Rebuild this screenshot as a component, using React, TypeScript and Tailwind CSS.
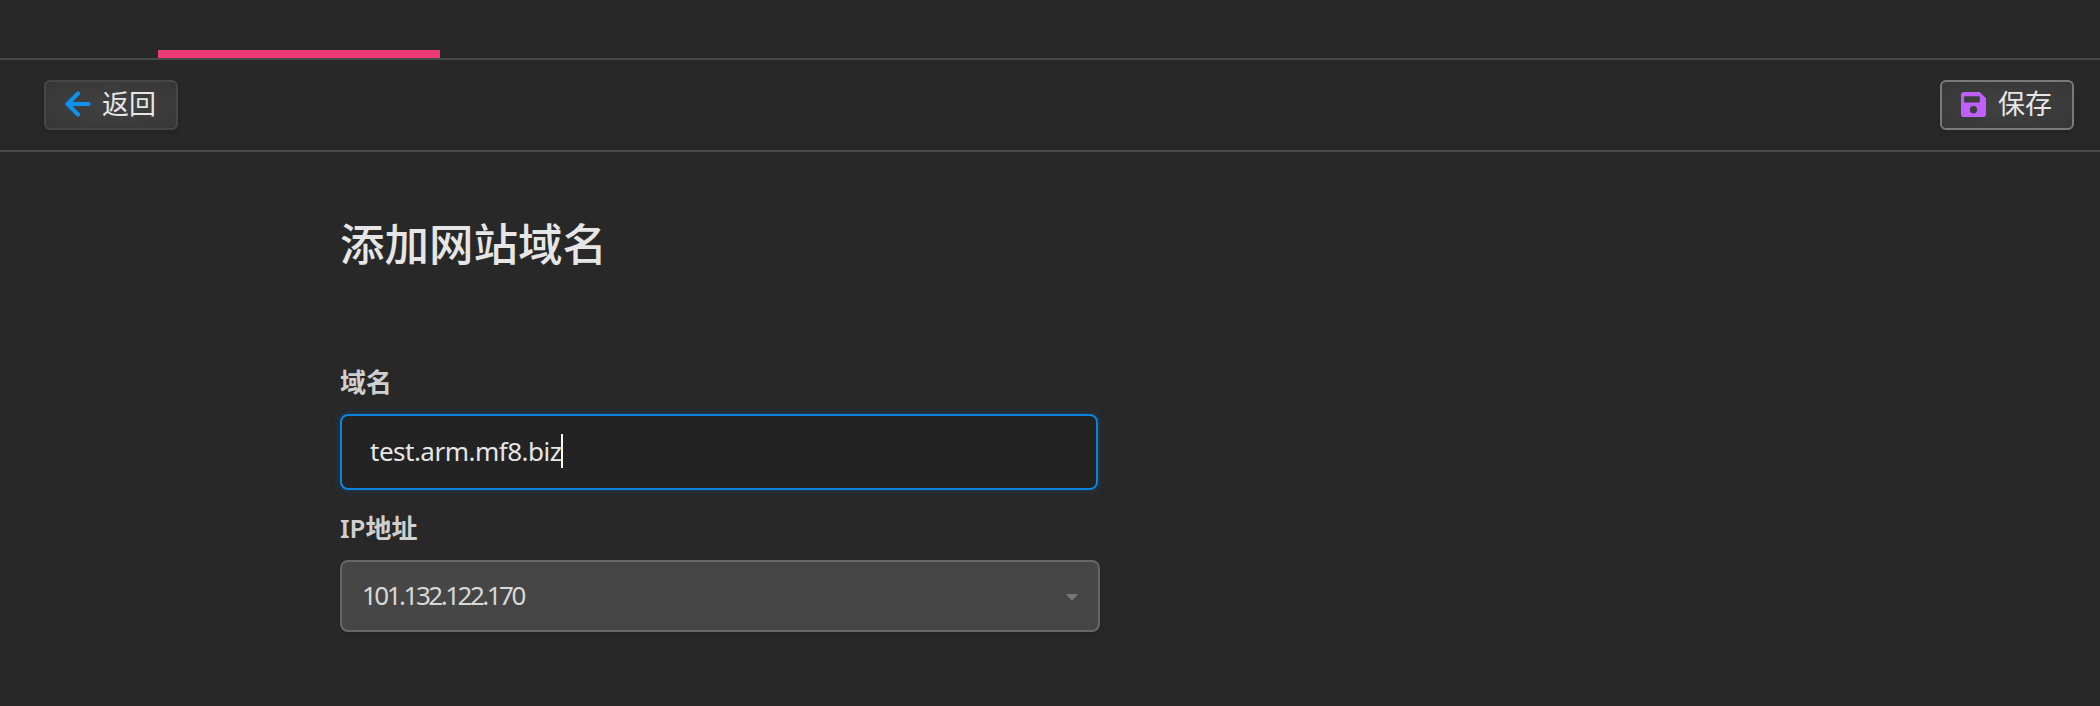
import { ArrowLeft } from 'lucide-react'

const font = "font-['Noto_Sans','Noto_Sans_CJK_SC',sans-serif]"

function SaveIcon({ className }: { className?: string }) {
  return (
    <svg className={className} viewBox="0 0 24 24" fill="currentColor">
      <path d="M3 0h15l6 6v15a3 3 0 0 1-3 3H3a3 3 0 0 1-3-3V3a3 3 0 0 1 3-3zm0 4v6h15V4zm9 9.5a3.5 3.5 0 1 0 0 7 3.5 3.5 0 0 0 0-7z" fillRule="evenodd" />
    </svg>
  )
}

export default function App() {
  return (
    <div className={`${font} h-[706px] w-[2100px] overflow-hidden bg-[#282828] text-[#e6e6e6]`}>
      {/* Tabs */}
      <div className="h-[60px] border-b-2 border-[#484848] pl-[158px] pt-[50px]">
        <div className="h-2 w-[282px] bg-[#ec3a76]" />
      </div>

      {/* Toolbar */}
      <div className="flex h-[92px] items-center justify-between border-b-2 border-[#484848] pl-11 pr-[26px]">
        <button className="flex h-[50px] w-[134px] items-center gap-[11px] rounded-md border-2 border-[#464646] bg-[radial-gradient(ellipse_at_center,#424242,#363636)] pb-[2px] pl-[19px] text-[27px] text-[#e6e6e6] shadow-md">
          <ArrowLeft className="h-[36px] w-[36px] -mx-[5px] text-[#0f90ec]" strokeWidth={2.8} />
          返回
        </button>
        <button className="flex h-[50px] w-[134px] items-center gap-[12px] rounded-md border-2 border-[#7a7a7a] bg-[radial-gradient(ellipse_at_center,#424242,#363636)] pb-[2px] pl-[19px] text-[27px] text-[#e6e6e6] shadow-md">
          <SaveIcon className="h-[25px] w-[25px] text-[#bf60fa]" />
          保存
        </button>
      </div>

      {/* Form */}
      <div className="ml-[340px] w-[760px]">
        <h1 className="mt-[62px] text-[44.5px] leading-[60px] font-medium text-[#e6e6e6]">添加网站域名</h1>

        <label className="mt-[90px] block text-[26px] leading-9 font-semibold text-[#cfcfcf]">域名</label>
        <div className="mt-[14px] flex h-[76px] w-[758px] items-center rounded-lg border-2 border-[#0a84dc] bg-[#232323] pb-[2px] pl-[28px] text-[26px] tracking-[-0.5px] text-[#e6e6e6] shadow-[0_0_8px_rgba(10,132,220,0.25)]">
          test.arm.mf8.biz
          <span className="h-[34px] w-[2px] bg-white" />
        </div>

        <label className="mt-[20px] block text-[26px] leading-9 font-semibold text-[#cfcfcf]">IP地址</label>
        <div className="relative mt-[14px] flex h-[72px] items-center rounded-lg border-2 border-[#666666] bg-[#464646] pb-[2px] pl-[20px] text-[26px] tracking-[-2.5px] text-[#d8d8d8] shadow-md">
          101.132.122.170
          <span className="absolute right-[20px] top-[32px] h-0 w-0 border-x-[6px] border-t-[7px] border-x-transparent border-t-[#777777]" />
        </div>
      </div>
    </div>
  )
}
